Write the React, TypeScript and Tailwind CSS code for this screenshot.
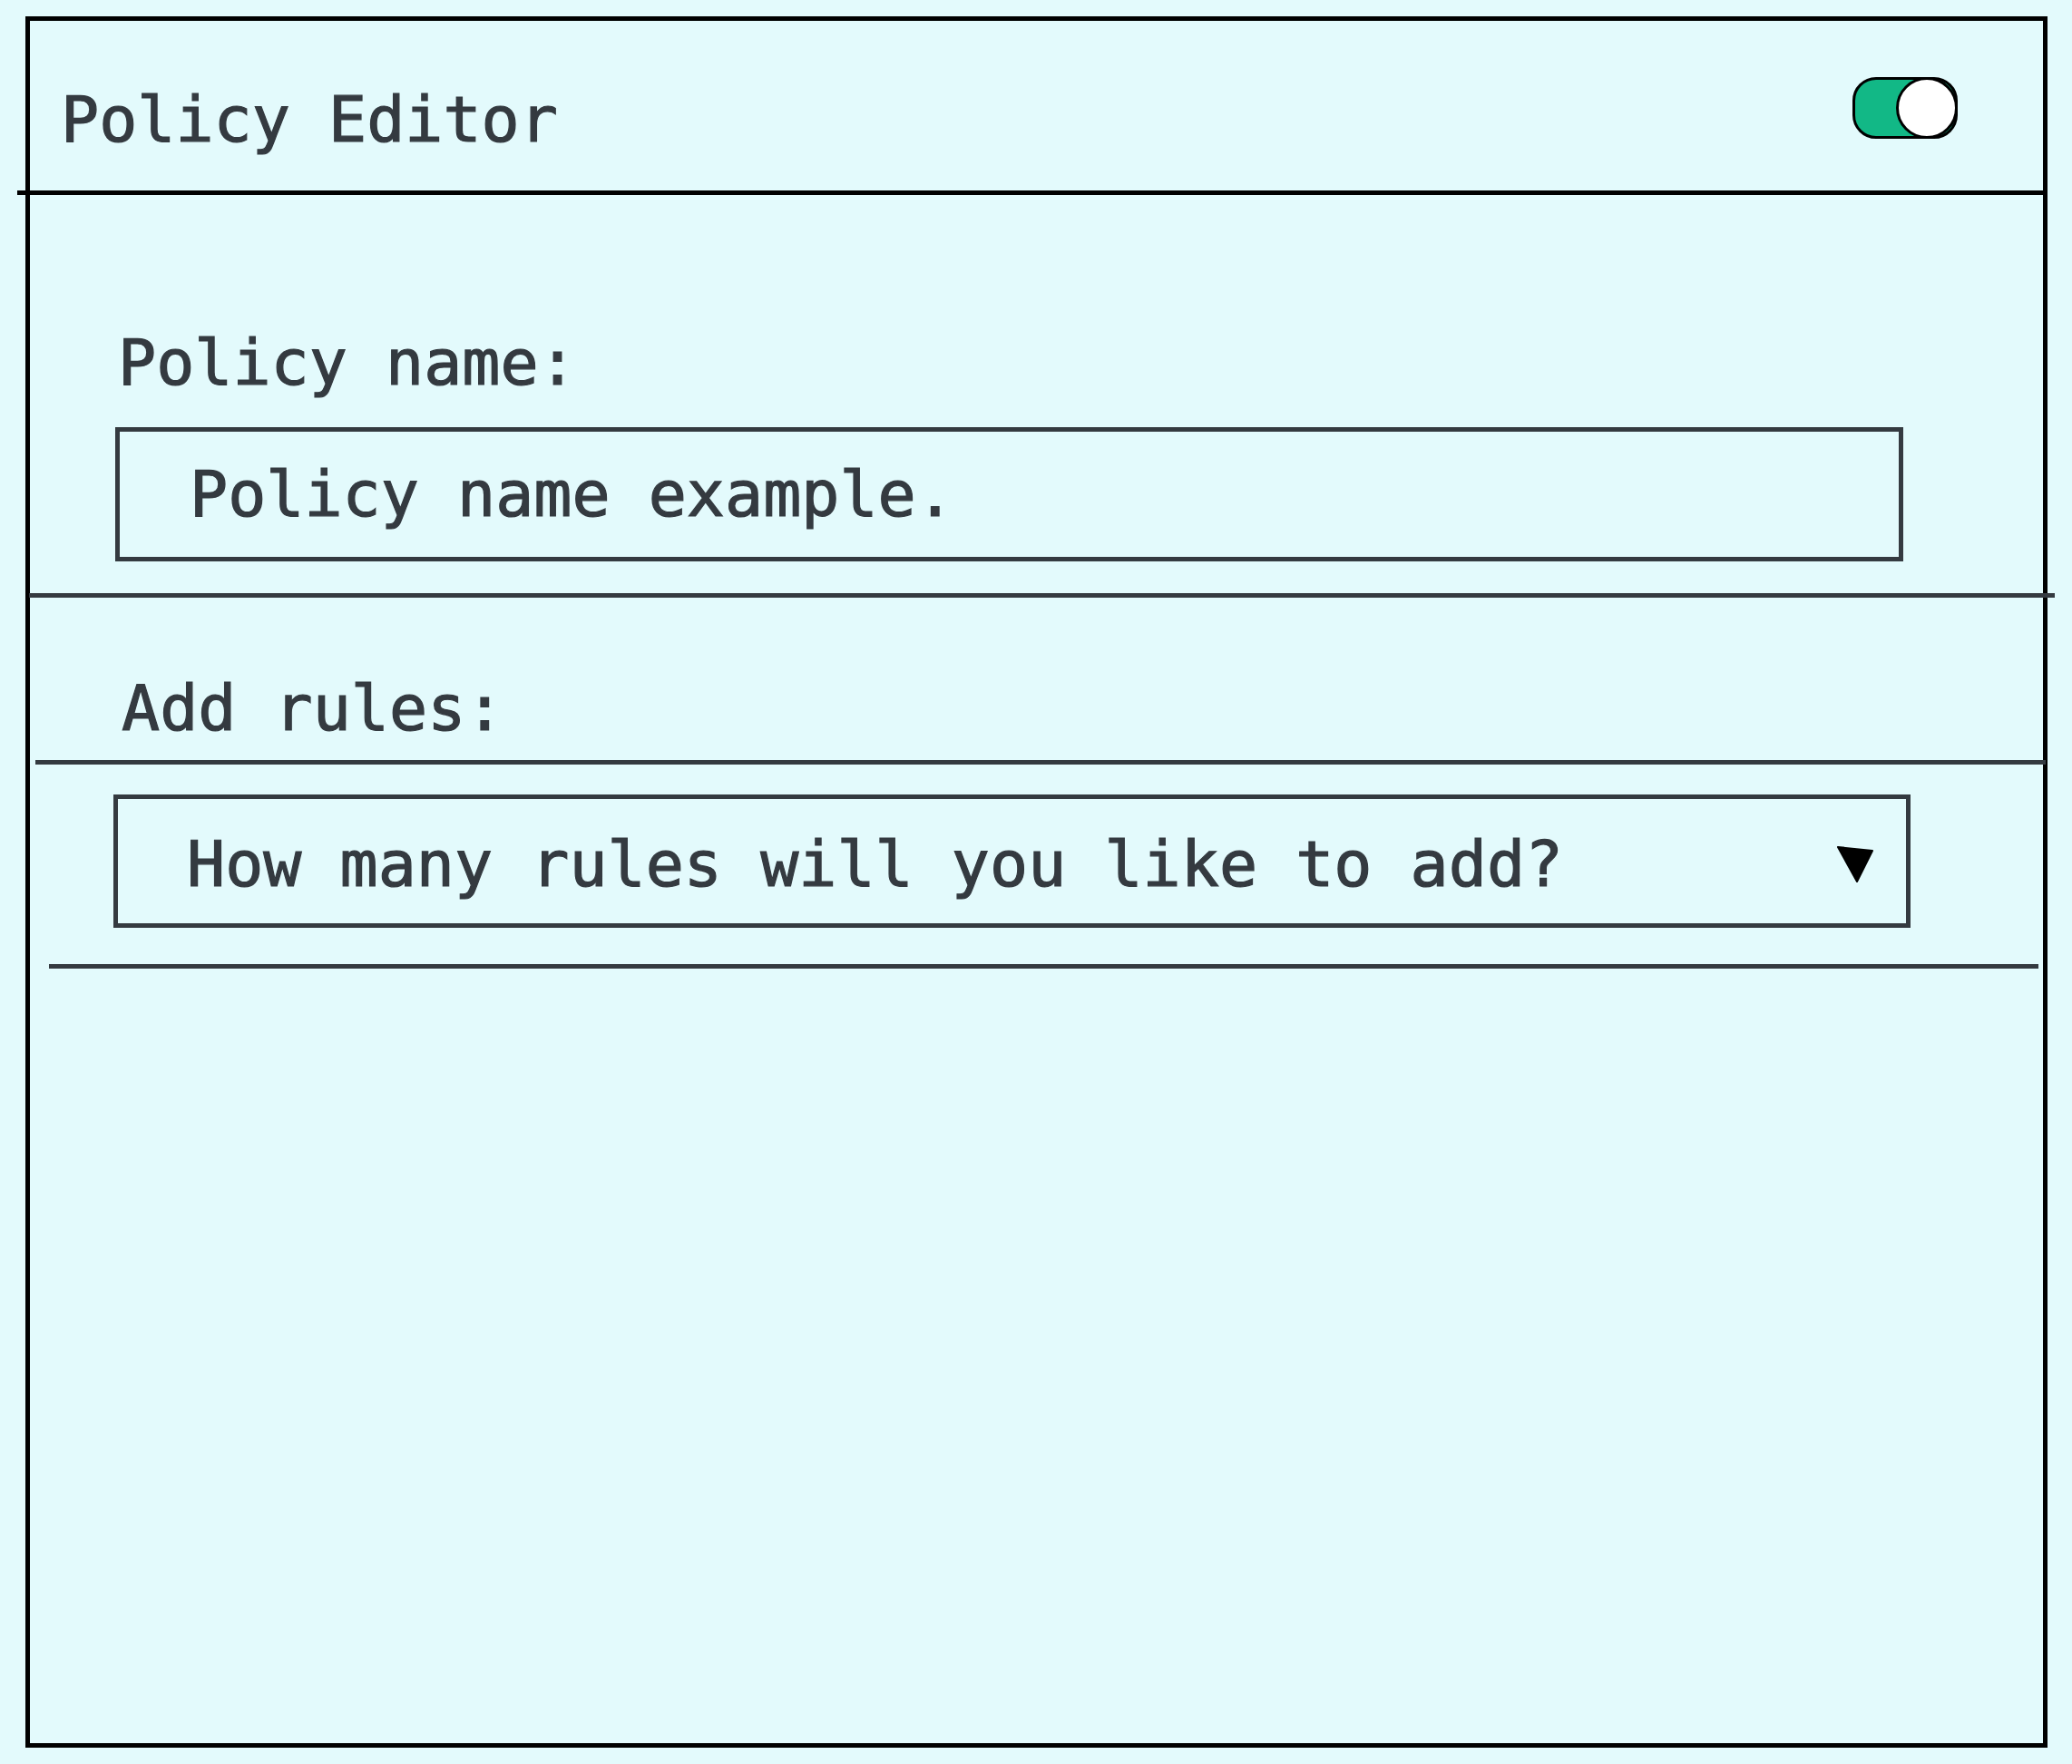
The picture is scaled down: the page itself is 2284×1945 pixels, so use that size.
const mono = "font-['DejaVu_Sans_Mono','Liberation_Mono',monospace]";

function Toggle() {
  return (
    <div className="relative mt-[62px] mr-[94px] h-[68px] w-[116px] rounded-[26px] border-[3px] border-black bg-[#12b886]">
      <div className="absolute right-[-3px] top-[-3px] h-[68px] w-[68px] rounded-full border-[3px] border-black bg-white" />
    </div>
  );
}

function Caret() {
  return (
    <svg width="40" height="42" viewBox="0 0 40 42" className="shrink-0">
      <path d="M1 2 L39 6 L22 40 Z" fill="#000" stroke="#000" strokeWidth="2" strokeLinejoin="round" />
    </svg>
  );
}

export default function App() {
  return (
    <div className={`min-h-[1945px] w-full bg-[#e3fafc] pt-[18px] pl-[28px] ${mono}`}>
      <div className="flex h-[1909px] w-[2229px] flex-col border-[5px] border-black text-[70px] leading-[80px] text-[#343a40] [-webkit-text-stroke:1.2px_#343a40]">
        <div className="flex h-[187px] items-start justify-between">
          <h1 className="pl-[34px] pt-[69px]">Policy Editor</h1>
          <Toggle />
        </div>
        <div className="-ml-[14px] h-[5px] w-[calc(100%+14px)] bg-black" />

        <label className="mt-[145px] pl-[97px]">Policy name:</label>
        <div className="ml-[94px] mt-[31px] flex h-[148px] w-[1971px] items-center border-[5px] border-[#343a40] pl-[77px]">
          Policy name example.
        </div>
        <div className="-ml-[1px] mt-[35px] h-[5px] w-[2233px] bg-[#343a40]" />

        <label className="mt-[82px] pl-[101px]">Add rules:</label>
        <div className="ml-[6px] mt-[17px] h-[5px] w-[2216px] bg-[#343a40]" />
        <div className="ml-[92px] mt-[33px] flex h-[147px] w-[1981px] items-center justify-between border-[5px] border-[#343a40] pl-[76px] pr-[36px] pt-[6px]">
          <span>How many rules will you like to add?</span>
          <Caret />
        </div>
        <div className="ml-[21px] mt-[40px] h-[5px] w-[2193px] bg-[#343a40]" />
      </div>
    </div>
  );
}
